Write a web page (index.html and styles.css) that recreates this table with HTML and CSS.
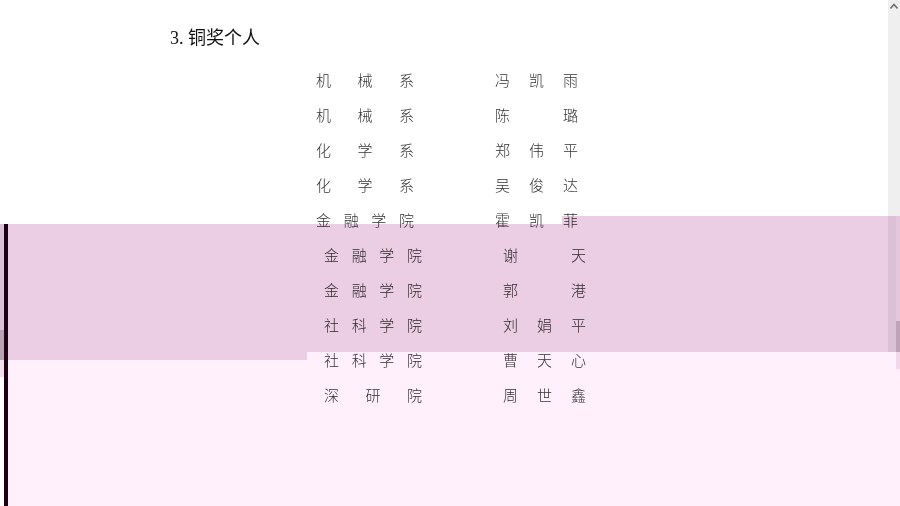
FILE: index.html
```html
<!DOCTYPE html>
<html lang="zh-CN">
<head>
<meta charset="utf-8">
<title>铜奖个人</title>
<link rel="stylesheet" href="styles.css">
</head>
<body>
<div class="doc">
  <h2 class="title">3. 铜奖个人</h2>
  <div class="group">
    <div class="row"><div class="dept"><span>机</span><span>械</span><span>系</span></div><div class="name"><span>冯</span><span>凯</span><span>雨</span></div></div>
    <div class="row"><div class="dept"><span>机</span><span>械</span><span>系</span></div><div class="name"><span>陈</span><span>璐</span></div></div>
    <div class="row"><div class="dept"><span>化</span><span>学</span><span>系</span></div><div class="name"><span>郑</span><span>伟</span><span>平</span></div></div>
    <div class="row"><div class="dept"><span>化</span><span>学</span><span>系</span></div><div class="name"><span>吴</span><span>俊</span><span>达</span></div></div>
    <div class="row"><div class="dept"><span>金</span><span>融</span><span>学</span><span>院</span></div><div class="name"><span>霍</span><span>凯</span><span>菲</span></div></div>
  </div>
  <div class="group shifted">
    <div class="row"><div class="dept"><span>金</span><span>融</span><span>学</span><span>院</span></div><div class="name"><span>谢</span><span>天</span></div></div>
    <div class="row"><div class="dept"><span>金</span><span>融</span><span>学</span><span>院</span></div><div class="name"><span>郭</span><span>港</span></div></div>
    <div class="row"><div class="dept"><span>社</span><span>科</span><span>学</span><span>院</span></div><div class="name"><span>刘</span><span>娟</span><span>平</span></div></div>
    <div class="row"><div class="dept"><span>社</span><span>科</span><span>学</span><span>院</span></div><div class="name"><span>曹</span><span>天</span><span>心</span></div></div>
    <div class="row"><div class="dept"><span>深</span><span>研</span><span>院</span></div><div class="name"><span>周</span><span>世</span><span>鑫</span></div></div>
  </div>
</div>

<div class="scrollbar">
  <svg class="arrow" width="8" height="6" viewBox="0 0 8 6"><path d="M0.5 5.5 L4 1.5 L7.5 5.5" fill="none" stroke="#6e6e6e" stroke-width="1.6"/></svg>
</div>

<div class="ov band-main"></div>
<div class="ov band-top"></div>
<div class="ov band-bottom"></div>
<div class="ov light-main"></div>
<div class="ov light-right"></div>
<div class="edge-bar"></div>
<div class="edge-strip"></div>
<div class="edge-thumb"></div>
<div class="edge-light"></div>
<div class="side-thumb"></div>
<div class="side-track"></div>
</body>
</html>
```

FILE: styles.css
```css
html, body {
  margin: 0;
  padding: 0;
  background: #ffffff;
  overflow: hidden;
  width: 900px;
  height: 506px;
}

.doc {
  padding-top: 28px;
  font-family: "Liberation Serif", "Noto Sans CJK SC", serif;
  color: #2a2a2a;
}

.title {
  margin: 0 0 14px 0;
  padding-left: 170px;
  font-size: 18px;
  line-height: 20px;
  font-weight: normal;
  color: #111;
}

.group {
  padding-left: 316px;
}

.group.shifted {
  padding-left: 324px;
}

.row {
  display: flex;
  height: 35px;
  align-items: center;
  font-family: "Noto Sans CJK SC", sans-serif;
  font-size: 15px;
  line-height: 35px;
  font-weight: 300;
  color: #333;
}

.dept {
  width: 98px;
  display: flex;
  justify-content: space-between;
}

.name {
  width: 83px;
  margin-left: 81px;
  display: flex;
  justify-content: space-between;
}

.scrollbar {
  position: absolute;
  left: 888px;
  top: 0;
  width: 12px;
  height: 352px;
  background: #efefef;
}

.arrow {
  position: absolute;
  left: 2px;
  top: 3px;
}

.ov {
  position: absolute;
  mix-blend-mode: multiply;
  pointer-events: none;
}

.band-main {
  left: 8px;
  top: 224px;
  width: 888px;
  height: 128px;
  background: #ebcde4;
}

.band-top {
  left: 562px;
  top: 216px;
  width: 334px;
  height: 8px;
  background: #ebcde4;
}

.band-bottom {
  left: 8px;
  top: 352px;
  width: 299px;
  height: 8px;
  background: #ebcde4;
}

.light-main {
  left: 307px;
  top: 352px;
  width: 593px;
  height: 154px;
  background: #fff0fc;
}

.light-right {
  left: 8px;
  top: 360px;
  width: 299px;
  height: 146px;
  background: #fff0fc;
}

.edge-bar {
  position: absolute;
  left: 4px;
  top: 224px;
  width: 4px;
  height: 282px;
  background: #1e0014;
}

.edge-strip {
  position: absolute;
  left: 0;
  top: 224px;
  width: 4px;
  height: 106px;
  background: #dcc0d6;
}

.edge-thumb {
  position: absolute;
  left: 0;
  top: 330px;
  width: 4px;
  height: 30px;
  background: #b8a2b3;
}

.edge-light {
  position: absolute;
  left: 0;
  top: 360px;
  width: 4px;
  height: 17px;
  background: #f4dcef;
}

.side-track {
  position: absolute;
  left: 896px;
  top: 216px;
  width: 4px;
  height: 105px;
  background: #e4c6dd;
}

.side-thumb {
  position: absolute;
  left: 896px;
  top: 321px;
  width: 4px;
  height: 48px;
  background: #f1d8eb;
}

.side-thumb::before {
  content: "";
  display: block;
  height: 31px;
  background: #bfa3b8;
}
```
